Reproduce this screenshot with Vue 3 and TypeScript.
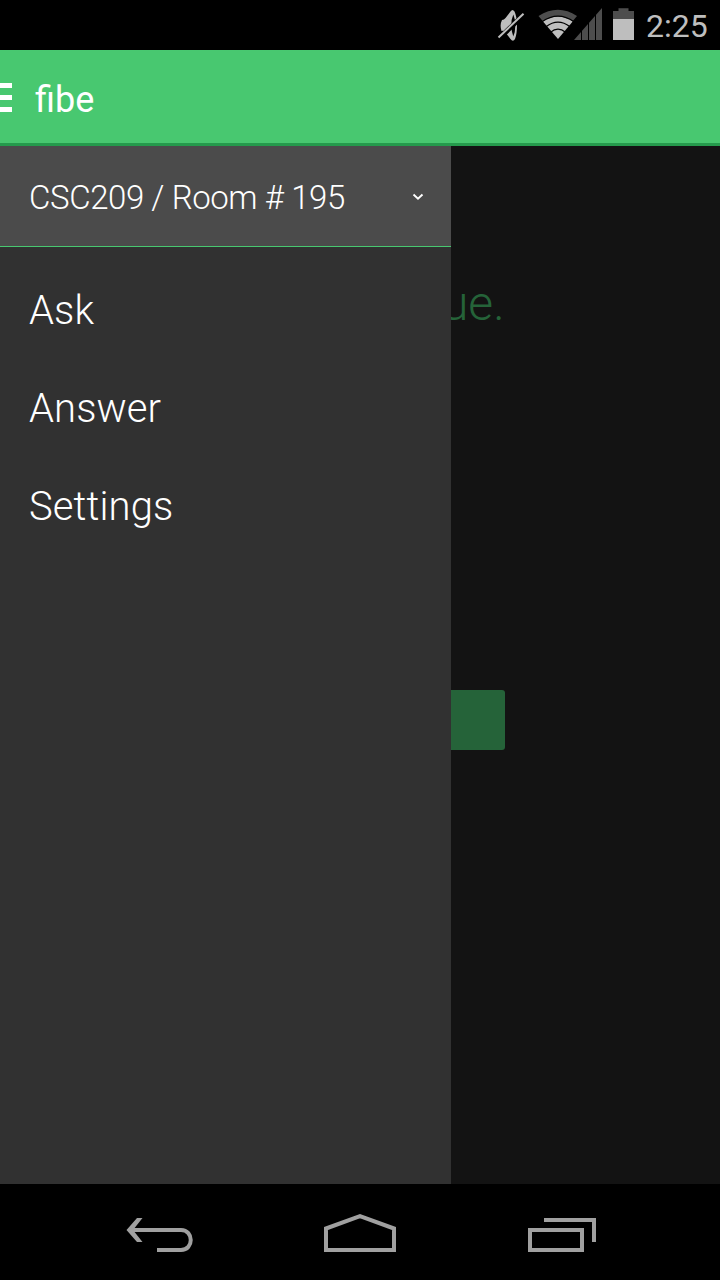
<script setup lang="ts">
const room = 'CSC209 / Room # 195'
const items: string[] = ['Ask', 'Answer', 'Settings']
</script>

<template>
  <div class="screen">
    <header class="status">
      <svg class="status-icons" width="150" height="50" viewBox="490 0 150 50">
        <path fill="#bebebe" d="M502 20 Q504 20 505.500 18 L510.500 11.500 Q512.500 8.500 514.500 11.500 Q517 17 517 25 Q517 34 515 39 Q513 42.500 510.500 39 L505 32 Q503 30 501.500 31 Q499.500 25 502 20Z" />
        <path fill="#000" d="M513.300 14.500 Q515.300 19 515.300 25.500 Q515.300 32 513.300 36.500 Q511.300 31 511.300 25.500 Q511.300 19 513.300 14.500Z" />
        <path stroke="#000" stroke-width="5" d="M499 38.500 L524.500 14" />
        <path stroke="#bebebe" stroke-width="2" d="M498.500 37.500 L523.500 13.700" />
        <path fill="#4d4d4d" d="M538.500 16 Q558 3.500 577 16 L572 22 Q558 12.500 543.500 22Z" />
        <path fill="#bebebe" d="M543 21.500 Q558 11.500 572.700 21.500 L558 39Z" />
        <g fill="none" stroke="#000" stroke-width="1.300">
          <path d="M542 21.800 Q558 10.500 574 21.800" />
          <path d="M546 26.800 Q558 17.500 570 26.800" />
          <path d="M550.500 32.300 Q558 26 565.500 32.300" />
        </g>
        <path fill="#4d4d4d" d="M574 40 L602 8 V40Z" />
        <path stroke="#000" stroke-width="1" d="M581.500 28 V40 M588.500 20 V40 M595.500 12 V40" />
        <path fill="#4d4d4d" d="M618.500 8.300 H628.500 V11 H634 V19 H613 V11 H618.500Z" />
        <path fill="#bebebe" d="M613 19 H634 V40 H613Z" />
      </svg>
      <span class="clock">2:25</span>
    </header>

    <div class="appbar">
      <div class="hamburger"><i></i><i></i><i></i></div>
      <h1 class="title">fibe</h1>
    </div>

    <main class="body">
      <nav class="drawer">
        <div class="room">
          <span>{{ room }}</span>
          <svg class="chevron" width="12" height="8" viewBox="0 0 12 8">
            <path d="M1.500 1.500 L6 5.700 L10.500 1.500" fill="none" stroke="#fff" stroke-width="1.900" />
          </svg>
        </div>
        <ul class="menu">
          <li v-for="item in items" :key="item">{{ item }}</li>
        </ul>
      </nav>
      <section class="content">
        <p class="message">ue.</p>
        <div class="action"></div>
      </section>
    </main>

    <footer class="navbar">
      <svg width="720" height="96" viewBox="0 1184 720 96" fill="none" stroke="#a0a0a0" stroke-width="4">
        <path d="M129 1230 H181 C194 1230 194 1250 181 1250 H157" />
        <path fill="#a0a0a0" stroke="none" d="M137 1218 H142.500 L133 1230 L142.500 1242 H137 L126.500 1230Z" />
        <path d="M326 1250 V1228.500 L360 1216.200 L394 1228.500 V1250Z" />
        <path d="M530 1230 H582 V1250 H530Z M544 1220 H594 V1242" />
      </svg>
    </footer>
  </div>
</template>

<style>
body {
  margin: 0;
  background: #000;
}
</style>

<style scoped>
.screen {
  width: 720px;
  height: 1280px;
  display: flex;
  flex-direction: column;
  overflow: hidden;
  background: #000;
  font-family: Roboto, "Liberation Sans", sans-serif;
}
.status {
  height: 50px;
  display: flex;
  padding-left: 490px;
}
.status-icons {
  flex: none;
}
.clock {
  margin-left: 6px;
  font-size: 32px;
  line-height: 52px;
  color: #bebebe;
}
.appbar {
  box-sizing: border-box;
  height: 96px;
  display: flex;
  align-items: center;
  padding-top: 2px;
  background: #48c870;
  border-bottom: 3px solid #259a4c;
}
.hamburger {
  width: 12px;
  display: flex;
  flex-direction: column;
  gap: 7px;
}
.hamburger i {
  height: 5px;
  background: #fff;
}
.title {
  margin: 5px 0 0 23px;
  font-size: 36px;
  line-height: 44px;
  font-weight: 400;
  color: #fff;
}
.body {
  height: 1038px;
  display: flex;
}
.drawer {
  width: 451px;
  flex: none;
  background: #313131;
  color: #fff;
  font-weight: 300;
}
.room {
  box-sizing: border-box;
  height: 101px;
  padding: 2px 27px 0 29px;
  display: flex;
  align-items: center;
  justify-content: space-between;
  background: #4b4b4b;
  border-bottom: 1px solid #48c870;
  font-size: 33px;
  letter-spacing: -0.43px;
}
.menu {
  list-style: none;
  margin: 0;
  padding: 15px 0 0 29px;
}
.menu li {
  height: 98px;
  line-height: 98px;
  font-size: 40px;
  letter-spacing: 0.1px;
}
.content {
  flex: 1;
  overflow: hidden;
  background: #131313;
}
.message {
  margin: 130px 0 0 -9px;
  font-size: 48px;
  line-height: 56px;
  font-weight: 300;
  color: #256339;
}
.action {
  width: 54px;
  height: 60px;
  margin-top: 358px;
  border-radius: 0 3px 3px 0;
  background: #256339;
}
.navbar {
  height: 96px;
}
.navbar svg {
  display: block;
}
</style>
